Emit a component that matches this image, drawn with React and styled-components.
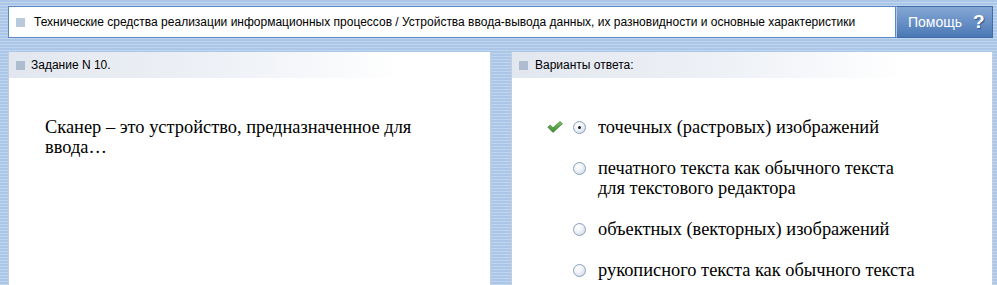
import React from 'react';
import styled, { createGlobalStyle } from 'styled-components';

const answers = [
  { lines: ['точечных (растровых) изображений'], checked: true, correct: true },
  { lines: ['печатного текста как обычного текста', 'для текстового редактора'] },
  { lines: ['объектных (векторных) изображений'] },
  { lines: ['рукописного текста как обычного текста'] },
];

const serif = `'Liberation Serif', 'Times New Roman', serif`;

const GlobalStyle = createGlobalStyle`
  html, body {
    margin: 0;
    padding: 0;
    height: 100%;
    overflow: hidden;
  }
  body {
    background: repeating-linear-gradient(
      180deg,
      #abc6e7 0px,
      #abc6e7 2px,
      #c0d5ee 2px,
      #c0d5ee 3px
    );
    font-family: 'Liberation Sans', Arial, sans-serif;
  }
`;

const Page = styled.div`
  padding: 6px 4px 0 8px;
`;

const Header = styled.header`
  display: flex;
  height: 32px;
`;

const TitleBox = styled.div`
  flex: 1;
  display: flex;
  align-items: center;
  background: #fff;
  border: 1px solid #5b87c3;
  padding-left: 7px;
  font-size: 12px;
  color: #000;
  white-space: nowrap;
  overflow: hidden;
`;

const Square = styled.span`
  flex: none;
  width: 9px;
  height: 9px;
  margin-right: ${(p) => p.gap || 9}px;
  background: ${(p) => p.color || '#b9c9de'};
`;

const HelpButton = styled.button`
  width: 97px;
  display: flex;
  align-items: center;
  padding: 0 0 0 11px;
  border: 1px solid #3f6ca8;
  border-left: 1px solid #b2c8e3;
  background: linear-gradient(180deg, #85a8d4 0%, #6890c6 50%, #4a78b4 100%);
  color: #fff;
  font-family: 'Liberation Sans', Arial, sans-serif;
  font-size: 14px;
  cursor: pointer;
`;

const Question = styled.span`
  margin-left: 11px;
  font-size: 19px;
  font-weight: bold;
  text-shadow: 1px 1px 1px #2d5486;
`;

const Columns = styled.main`
  display: grid;
  grid-template-columns: 483px 482px;
  column-gap: 20px;
  margin-top: 14px;
`;

const Panel = styled.section`
  background: #fff;
  border-left: 1px solid #c3cddb;
  border-right: 1px solid #c3cddb;
  min-height: 240px;
`;

const PanelHead = styled.div`
  display: flex;
  align-items: center;
  width: 395px;
  height: 26px;
  padding-left: 7px;
  box-sizing: border-box;
  background: linear-gradient(90deg, #e2e7ef 0%, #eef1f6 55%, #ffffff 100%);
  font-size: 12px;
  color: #000;
`;

const QuestionText = styled.p`
  margin: 39px 0 0 36px;
  width: 400px;
  font-family: ${serif};
  font-size: 18.4px;
  line-height: 20px;
  color: #000;
`;

const AnswerList = styled.ul`
  list-style: none;
  margin: 39px 0 0 35px;
  padding: 0;
  display: flex;
  flex-direction: column;
  gap: 21px;
`;

const AnswerRow = styled.li`
  display: grid;
  grid-template-columns: 16px 13px auto;
  column-gap: 10px;
  align-items: start;
  font-family: ${serif};
  font-size: 18.4px;
  line-height: 20px;
  color: #000;
`;

const Mark = styled.span`
  height: 20px;
  display: flex;
  align-items: center;
`;

const Radio = styled.span`
  margin-top: 4px;
  width: 13px;
  height: 13px;
  box-sizing: border-box;
  border-radius: 50%;
  border: 1px solid #8aa0bd;
  background: radial-gradient(circle at 35% 30%, #ffffff 0%, #eef2f7 45%, #c9d3e1 100%);
  display: flex;
  align-items: center;
  justify-content: center;

  &::after {
    content: '';
    display: ${(p) => (p.checked ? 'block' : 'none')};
    width: 3px;
    height: 3px;
    border-radius: 50%;
    background: #1a1a1a;
  }
`;

const AnswerText = styled.span`
  padding-left: 2px;
  white-space: nowrap;
`;

const Line = styled.span`
  display: block;
`;

const CheckIcon = () => (
  <svg width="16" height="12" viewBox="0 0 16 12">
    <defs>
      <linearGradient id="chk" x1="0" y1="0" x2="0" y2="1">
        <stop offset="0" stopColor="#7cc46a" />
        <stop offset="1" stopColor="#3b8a2e" />
      </linearGradient>
    </defs>
    <path
      d="M0.8 6.2 L3.2 4 L6 6.8 L13 0.6 L15.4 2.8 L6 11.4 Z"
      fill="url(#chk)"
      stroke="#3a7a30"
      strokeWidth="0.7"
      strokeLinejoin="round"
    />
  </svg>
);

const App = () => (
  <>
    <GlobalStyle />
    <Page>
      <Header>
        <TitleBox>
          <Square />
          Технические средства реализации информационных процессов / Устройства ввода-вывода данных, их разновидности и основные характеристики
        </TitleBox>
        <HelpButton>
          Помощь
          <Question>?</Question>
        </HelpButton>
      </Header>
      <Columns>
        <Panel>
          <PanelHead>
            <Square color="#adbccf" gap={6} />
            Задание N 10.
          </PanelHead>
          <QuestionText>Сканер – это устройство, предназначенное для ввода…</QuestionText>
        </Panel>
        <Panel>
          <PanelHead>
            <Square color="#adbccf" gap={7} />
            Варианты ответа:
          </PanelHead>
          <AnswerList>
            {answers.map((a) => (
              <AnswerRow key={a.lines[0]}>
                <Mark>{a.correct && <CheckIcon />}</Mark>
                <Radio checked={a.checked} />
                <AnswerText>
                  {a.lines.map((line) => (
                    <Line key={line}>{line}</Line>
                  ))}
                </AnswerText>
              </AnswerRow>
            ))}
          </AnswerList>
        </Panel>
      </Columns>
    </Page>
  </>
);

export default App;
